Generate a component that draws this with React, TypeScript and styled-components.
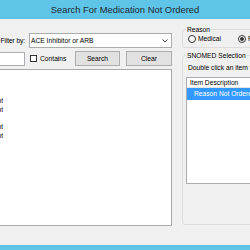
import React from "react";
import styled, { createGlobalStyle } from "styled-components";

const GlobalStyle = createGlobalStyle`
  html, body {
    margin: 0;
    padding: 0;
    background: #f0f0f0;
    overflow: hidden;
  }
  body {
    font-family: "Liberation Sans", Arial, sans-serif;
    color: #000;
  }
`;

const leftRows = ["", "", "", "Patient", "Patient", "", "Patient", "Patient", "", "", "", ""];

const Viewport = styled.div`
  width: 250px;
  height: 250px;
  overflow: hidden;
`;

// the window is wider than the screenshot, so it sticks out on both sides
const Window = styled.div`
  width: 330px;
  height: 250px;
  margin-left: -40px;
  display: flex;
  flex-direction: column;
  background: #f0f0f0;
`;

const TitleBar = styled.div`
  flex: none;
  height: 19px;
  background: #60c4e8;
  display: flex;
  align-items: center;
  justify-content: center;
  font-size: 9.4px;
  color: #1b2a33;
`;

const Client = styled.div`
  flex: 1;
  min-height: 0;
  display: flex;
  gap: 10px;
`;

const BottomEdge = styled.div`
  flex: none;
  height: 5px;
  background: #60c4e8;
`;

const LeftColumn = styled.div`
  width: 204px;
  padding: 14px 0 0 8px;
  display: flex;
  flex-direction: column;
  font-size: 6.7px;
`;

const FilterRow = styled.div`
  height: 15px;
  display: flex;
  align-items: center;
`;

const FieldLabel = styled.span`
  flex: 1;
  text-align: right;
  margin-right: 4px;
  letter-spacing: -0.12px;
  white-space: nowrap;
`;

const Combo = styled.div`
  width: 143px;
  height: 15px;
  box-sizing: border-box;
  border: 1px solid #acacac;
  background: #fff;
  display: flex;
  align-items: center;
  justify-content: space-between;
  padding: 0 3px 0 1px;
`;

const SearchRow = styled.div`
  height: 15px;
  margin-top: 3px;
  display: flex;
  align-items: center;
`;

const TextInput = styled.div`
  flex: 1;
  height: 14px;
  box-sizing: border-box;
  border: 1px solid #abadb3;
  background: #fff;
`;

const CheckBox = styled.span`
  width: 7px;
  height: 7px;
  box-sizing: border-box;
  margin-left: 5px;
  border: 1px solid #333;
  background: #fff;
`;

const CheckLabel = styled.span`
  width: 35px;
  margin-left: 3px;
  white-space: nowrap;
`;

const Button = styled.div<{ $w: number; $gap?: number }>`
  width: ${(p) => p.$w}px;
  height: 15px;
  margin-left: ${(p) => p.$gap ?? 0}px;
  box-sizing: border-box;
  border: 1px solid #adadad;
  background: #e1e1e1;
  display: flex;
  align-items: center;
  justify-content: center;
`;

const ResultList = styled.div`
  height: 157px;
  margin-top: 3px;
  box-sizing: border-box;
  border: 1px solid #a9a9a9;
  background: #fff;
  padding-top: 1px;
  overflow: hidden;
`;

const ResultRow = styled.div`
  height: 8.7px;
  line-height: 8.7px;
  width: 34px;
  text-align: right;
  overflow: hidden;
  white-space: nowrap;
`;

const RightColumn = styled.div`
  flex: 1;
  padding-top: 10px;
  display: flex;
  flex-direction: column;
  font-size: 6.7px;
`;

const GroupBox = styled.div<{ $h: number; $gap?: number }>`
  position: relative;
  height: ${(p) => p.$h}px;
  margin-top: ${(p) => p.$gap ?? 0}px;
  box-sizing: border-box;
  border: 1px solid #dcdcdc;
  border-radius: 3px;
`;

const Caption = styled.span`
  position: absolute;
  top: -5px;
  left: 3px;
  line-height: 9px;
  padding: 0 1px;
  background: #f0f0f0;
  white-space: nowrap;
`;

const RadioRow = styled.div`
  height: 100%;
  display: flex;
  align-items: center;
  padding-left: 5px;
`;

const RadioOption = styled.label<{ $w?: number }>`
  display: flex;
  align-items: center;
  gap: 2px;
  width: ${(p) => (p.$w ? `${p.$w}px` : "auto")};
  white-space: nowrap;
`;

const RadioDot = styled.span<{ $on?: boolean }>`
  width: 8px;
  height: 8px;
  box-sizing: border-box;
  border: 1px solid #333;
  border-radius: 50%;
  background: #fff;
  display: flex;
  align-items: center;
  justify-content: center;
  &::after {
    content: "";
    width: 4px;
    height: 4px;
    border-radius: 50%;
    background: ${(p) => (p.$on ? "#333" : "transparent")};
  }
`;

const SelectionBody = styled.div`
  padding: 7px 0 0 3px;
  display: flex;
  flex-direction: column;
`;

const Hint = styled.div`
  line-height: 9px;
  margin-left: 2px;
  white-space: nowrap;
`;

const ListView = styled.div`
  height: 107px;
  margin-top: 5px;
  box-sizing: border-box;
  border: 1px solid #abadb3;
  border-right: none;
  background: #fff;
`;

const HeaderCell = styled.div`
  height: 10px;
  line-height: 9px;
  box-sizing: border-box;
  border-bottom: 1px solid #e5e5e5;
  padding-left: 3px;
  white-space: nowrap;
`;

const ItemRow = styled.div<{ $selected?: boolean }>`
  height: 12px;
  line-height: 12px;
  padding-left: 7px;
  white-space: nowrap;
  background: ${(p) => (p.$selected ? "#3399ff" : "transparent")};
  color: ${(p) => (p.$selected ? "#fff" : "#000")};
`;

const Chevron = () => (
  <svg width="6" height="4" viewBox="0 0 6 4">
    <path d="M0.5 0.5 L3 3 L5.5 0.5" fill="none" stroke="#444" strokeWidth="1" />
  </svg>
);

export default function App() {
  return (
    <Viewport>
      <GlobalStyle />
      <Window>
        <TitleBar>Search For Medication Not Ordered</TitleBar>
        <Client>
          <LeftColumn>
            <FilterRow>
              <FieldLabel>Filter by:</FieldLabel>
              <Combo>
                <span>ACE Inhibitor or ARB</span>
                <Chevron />
              </Combo>
            </FilterRow>
            <SearchRow>
              <TextInput />
              <CheckBox />
              <CheckLabel>Contains</CheckLabel>
              <Button $w={45}>Search</Button>
              <Button $w={46} $gap={6}>
                Clear
              </Button>
            </SearchRow>
            <ResultList>
              {leftRows.map((r, i) => (
                <ResultRow key={i}>{r}</ResultRow>
              ))}
            </ResultList>
          </LeftColumn>
          <RightColumn>
            <GroupBox $h={19}>
              <Caption>Reason</Caption>
              <RadioRow>
                <RadioOption $w={50}>
                  <RadioDot />
                  Medical
                </RadioOption>
                <RadioOption>
                  <RadioDot $on />
                  Patient
                </RadioOption>
              </RadioRow>
            </GroupBox>
            <GroupBox $h={170} $gap={7}>
              <Caption>SNOMED Selection</Caption>
              <SelectionBody>
                <Hint>Double click an item to select it</Hint>
                <ListView>
                  <HeaderCell>Item Description</HeaderCell>
                  <ItemRow $selected>Reason Not Ordered</ItemRow>
                </ListView>
              </SelectionBody>
            </GroupBox>
          </RightColumn>
        </Client>
        <BottomEdge />
      </Window>
    </Viewport>
  );
}
